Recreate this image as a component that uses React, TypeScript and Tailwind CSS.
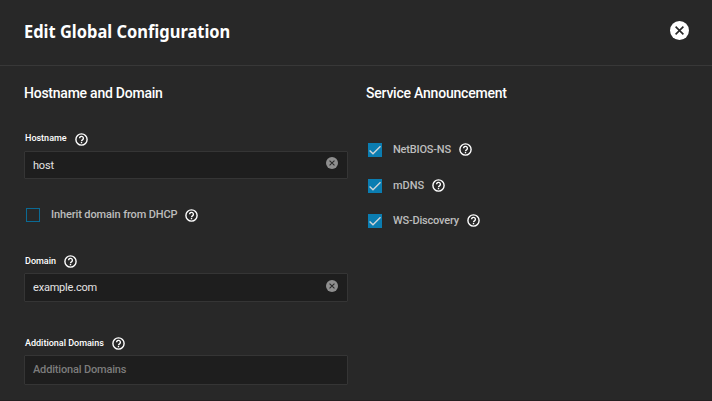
import React from "react";

function Help({ className = "" }: { className?: string }) {
  return (
    <svg viewBox="0 0 15 15" className={`size-[15px] shrink-0 ${className}`} fill="none" stroke="white">
      <circle cx="7.5" cy="7.5" r="5.6" strokeWidth="1.4" />
      <path d="M5.6 6.3a1.9 1.9 0 1 1 3.1 1.4c-.7.55-1.2.8-1.2 1.6" strokeWidth="1.35" />
      <path d="M7.5 10v1.3" strokeWidth="1.4" />
    </svg>
  );
}

function Cancel({ className }: { className: string }) {
  return (
    <svg viewBox="0 0 20 20" className={`shrink-0 ${className}`}>
      <circle cx="10" cy="10" r="10" fill="currentColor" />
      <path d="m5.9 5.9 8.2 8.2m0-8.2-8.2 8.2" stroke="#282828" strokeWidth="1.7" />
    </svg>
  );
}

function Label({ text, className, iconClassName = "" }: { text: string; className: string; iconClassName?: string }) {
  return (
    <div className="flex h-[15px] items-start pl-px">
      <span className={`shrink-0 whitespace-nowrap text-[9px] leading-[14px] font-medium ${className}`}>{text}</span>
      <Help className={iconClassName} />
    </div>
  );
}

function Checkbox({ checked = false }: { checked?: boolean }) {
  return checked ? (
    <span className="size-[14px] shrink-0 bg-[#0b7db1]">
      <svg viewBox="0 0 14 14" className="size-[14px]" fill="none">
        <path d="M1.6 7.4 5 10.8 12.5 3.3" stroke="#d0d5d8" strokeWidth="1.4" />
      </svg>
    </span>
  ) : (
    <span className="size-[14px] shrink-0 border border-[#0b6a94]" />
  );
}

function Service({ text, className }: { text: string; className: string }) {
  return (
    <div className="flex h-[14px] items-start">
      <Checkbox checked />
      <span className={`ml-[11px] -mt-[3px] shrink-0 whitespace-nowrap text-[11px] leading-[20px] font-medium text-[#bdbdbd] ${className}`}>{text}</span>
      <Help className="-mt-[1px]" />
    </div>
  );
}

export default function App() {
  return (
    <main className="h-[401px] w-[712px] overflow-hidden border-b border-[#231f20] bg-[#282828] font-['Roboto',sans-serif] text-white">
      <header className="flex h-[66px] items-start justify-between border-b border-[#383838] pl-6 pr-[23px]">
        <h1 className="mt-[18px] w-[206px] origin-left scale-x-[0.914] whitespace-nowrap font-['Noto_Sans',sans-serif] text-[18px] leading-[27px] font-bold">
          Edit Global Configuration
        </h1>
        <button aria-label="Close" className="mt-[21px]">
          <Cancel className="size-[19px]" />
        </button>
      </header>
      <div className="flex pl-6">
        <section className="w-[324px]">
          <h2 className="mt-[18px] h-[20px] whitespace-nowrap text-[14px] leading-[19px] font-medium tracking-[-0.24px]">Hostname and Domain</h2>
          <div className="mt-[27px]">
            <Label text="Hostname" className="w-[49px]" iconClassName="mt-px" />
          </div>
          <div className="mt-[5px] flex h-[28px] justify-between rounded-[1px] border border-[#353535] bg-[#1e1e1e] px-[8px]">
            <span className="text-[11px] leading-[27px] tracking-[-0.2px] text-[#e4e4e4]">host</span>
            <Cancel className="mt-[5px] mr-[1px] size-[12px] text-[#8e8e8e]" />
          </div>
          <div className="mt-[29px] flex h-[14px] items-start pl-[2px]">
            <Checkbox />
            <span className="ml-[11px] -mt-[3px] w-[133px] shrink-0 whitespace-nowrap text-[11px] leading-[20px] font-medium tracking-[-0.12px] text-[#bdbdbd]">Inherit domain from DHCP</span>
            <Help />
          </div>
          <div className="mt-[32px]">
            <Label text="Domain" className="w-[38px]" />
          </div>
          <div className="mt-[4px] flex h-[29px] justify-between rounded-[1px] border border-[#353535] bg-[#1e1e1e] px-[8px]">
            <span className="text-[11px] leading-[27px] tracking-[-0.2px] text-[#e4e4e4]">example.com</span>
            <Cancel className="mt-[6px] mr-[1px] size-[12px] text-[#8e8e8e]" />
          </div>
          <div className="mt-[34px]">
            <Label text="Additional Domains" className="w-[85.5px]" />
          </div>
          <div className="mt-[4px] h-[30px] rounded-[1px] border border-[#353535] bg-[#1e1e1e] pl-[8px]">
            <span className="block whitespace-nowrap text-[11px] leading-[27px] font-medium tracking-[-0.17px] text-[#7c7c7c]">Additional Domains</span>
          </div>
        </section>
        <section className="ml-[18px]">
          <h2 className="mt-[18px] h-[20px] whitespace-nowrap text-[14px] leading-[19px] font-medium tracking-[-0.22px]">Service Announcement</h2>
          <div className="mt-[39px] flex flex-col gap-[21.6px] pl-[2px]">
            <Service text="NetBIOS-NS" className="w-[64.5px] tracking-[-0.2px]" />
            <Service text="mDNS" className="w-[38px]" />
            <Service text="WS-Discovery" className="w-[73px] tracking-[-0.2px]" />
          </div>
        </section>
      </div>
    </main>
  );
}
